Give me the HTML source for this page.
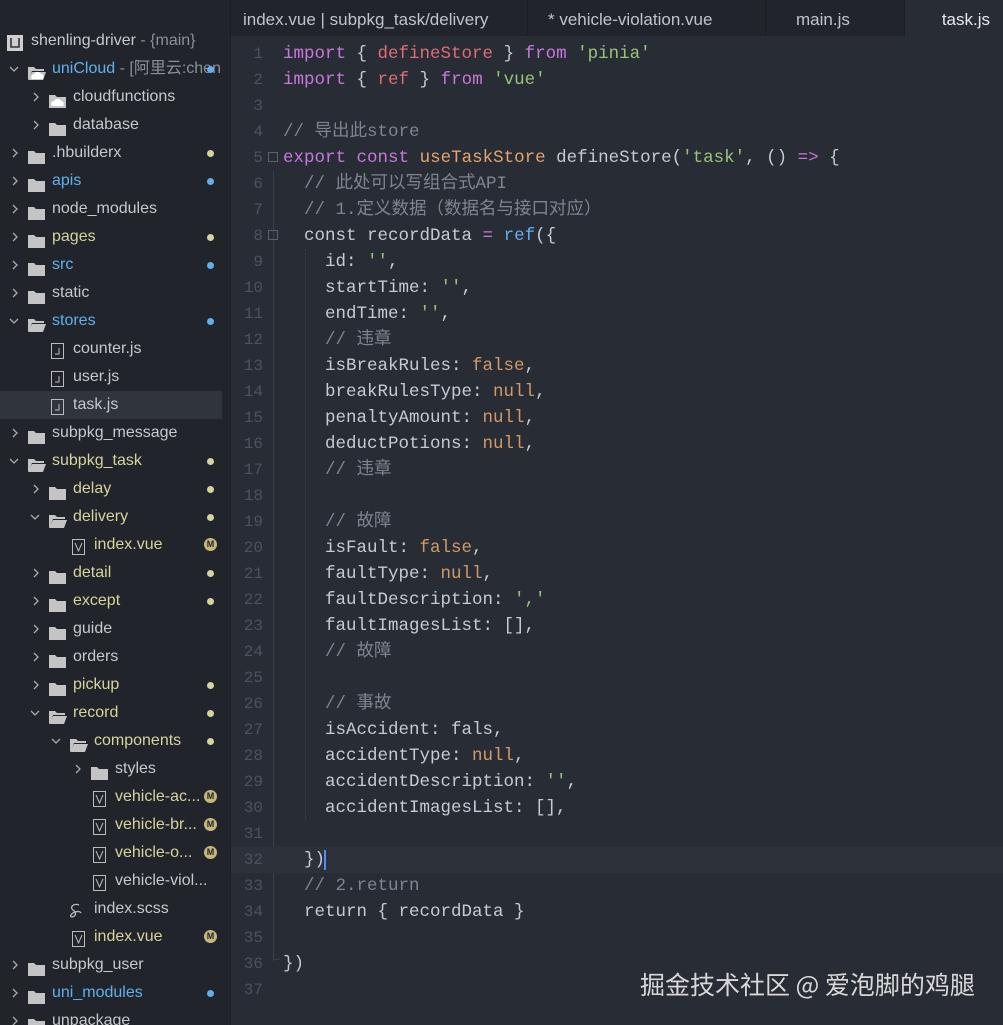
<!DOCTYPE html>
<html style="height:1025px;overflow:hidden"><head><meta charset="utf-8"><style>
*{margin:0;padding:0;box-sizing:border-box}
body{width:1003px;height:1025px;overflow:hidden;background:#282c34;position:relative;font-family:"Liberation Sans","Noto Sans CJK SC",sans-serif}
#side{position:absolute;left:0;top:0;width:231px;height:1025px;background:#21252b;border-right:1px solid #1b1e23}
#tree{position:absolute;left:0;top:0;width:231px;height:1025px;overflow:hidden}
.r{position:absolute;left:0;width:222px;height:28px;font-size:16px;line-height:28px;color:#c5c8cc;white-space:nowrap}
.r.sel{background:#2f343d}
.ar{position:absolute;top:0;width:10px;height:28px}
.ar svg{position:absolute;top:9px;left:0}
.ic{position:absolute;top:7px}
.t{position:absolute;top:0}
.b{color:#61afef}.y{color:#d6d39c}.g{color:#8a8f98}
.dot{position:absolute;left:207px;top:11px;width:7px;height:7px;border-radius:50%}
.db{background:#61afef}.dy{background:#d6d39c}
.m{position:absolute;left:204px;top:7px;width:13px;height:13px;border-radius:50%;background:#c9b77a;color:#21252b;font-size:9px;line-height:13px;text-align:center;font-weight:bold}
#tabs{position:absolute;left:231px;top:0;width:772px;height:36px;background:#21252b}
.tab{position:absolute;top:0;height:36px;line-height:40px;font-size:17px;color:#c0c4ca;border-right:1px solid #1b1e23}
#code{position:absolute;left:231px;top:41px;width:772px;height:984px;overflow:hidden;font-family:"Liberation Mono","Noto Sans CJK SC",monospace;font-size:17.5px;line-height:26px;color:#c5cad3}
.ln{position:absolute;width:32px;text-align:right;left:0;color:#4b5263;font-size:16px}
.cl{position:absolute;left:52px;white-space:pre}
.k{color:#c678dd}.rd{color:#e06c75}.s{color:#98c379}.o{color:#d19a66}.c{color:#7f848e}.bl{color:#61afef}.fn{color:#e5a46b}
</style></head><body>
<div id="side"></div>
<div id="tabs">
<div class="tab" style="left:0;width:297px;padding-left:12px">index.vue | subpkg_task/delivery</div>
<div class="tab" style="left:297px;width:238px;padding-left:20px">* vehicle-violation.vue</div>
<div class="tab" style="left:535px;width:139px;padding-left:30px">main.js</div>
<div class="tab" style="left:674px;width:98px;background:#282c34;color:#e6e8eb;text-align:right;padding-right:13px;border:none">task.js</div>
</div>

<div id="tree"></div>
<script>
var items=[
[0,'n','logo','shenling-driver','', ' - {main}'],
[0,'o','cloudo','uniCloud','b',' - [阿里云:chen','db'],
[1,'c','cloud','cloudfunctions',''],
[1,'c','f','database',''],
[0,'c','f','.hbuilderx','', '', 'dy'],
[0,'c','f','apis','b','','db'],
[0,'c','f','node_modules',''],
[0,'c','f','pages','y','','dy'],
[0,'c','f','src','b','','db'],
[0,'c','f','static',''],
[0,'o','fo','stores','b','','db'],
[1,'n','js','counter.js',''],
[1,'n','js','user.js',''],
[1,'n','js','task.js','', '', '', 'sel'],
[0,'c','f','subpkg_message',''],
[0,'o','fo','subpkg_task','y','','dy'],
[1,'c','f','delay','y','','dy'],
[1,'o','fo','delivery','y','','dy'],
[2,'n','v','index.vue','y','','M'],
[1,'c','f','detail','y','','dy'],
[1,'c','f','except','y','','dy'],
[1,'c','f','guide',''],
[1,'c','f','orders',''],
[1,'c','f','pickup','y','','dy'],
[1,'o','fo','record','y','','dy'],
[2,'o','fo','components','y','','dy'],
[3,'c','f','styles',''],
[3,'n','v','vehicle-ac...','y','','M'],
[3,'n','v','vehicle-br...','y','','M'],
[3,'n','v','vehicle-o...','y','','M'],
[3,'n','v','vehicle-viol...',''],
[2,'n','scss','index.scss',''],
[2,'n','v','index.vue','y','','M'],
[0,'c','f','subpkg_user',''],
[0,'c','f','uni_modules','b','','db'],
[0,'c','f','unpackage','']
];
var ic={
f:'<svg width="17" height="14"><path d="M0 1h6l2 2h9v11H0z" fill="#c4c4c4"/></svg>',
fo:'<svg width="18" height="14"><path d="M0 1h6l2 2h8v2H4L1 13H0z" fill="#c4c4c4"/><path d="M4 6h14l-3 8H0z" fill="#c4c4c4"/></svg>',
cloud:'<svg width="17" height="14"><path d="M0 1h6l2 2h9v11H0z" fill="#c4c4c4"/><path d="M3 12a3 3 0 0 1 2-5a4 4 0 0 1 7 0a3 3 0 0 1 2 5z" fill="#fff"/></svg>',
cloudo:'<svg width="18" height="14"><path d="M0 1h6l2 2h8v2H4L1 13H0z" fill="#c4c4c4"/><path d="M4 6h14l-3 8H0z" fill="#c4c4c4"/><path d="M4 13a3 3 0 0 1 2-5a4 4 0 0 1 7 0a3 3 0 0 1 2 5z" fill="#fff"/></svg>',
js:'<svg width="13" height="16"><rect x="0.5" y="0.5" width="12" height="15" fill="none" stroke="#bbb"/><path d="M8 5v6H4" fill="none" stroke="#bbb"/></svg>',
v:'<svg width="13" height="16"><rect x="0.5" y="0.5" width="12" height="15" fill="none" stroke="#bbb"/><path d="M3 4l3.5 8L10 4" fill="none" stroke="#bbb"/></svg>',
scss:'<svg width="16" height="16"><path d="M11 2C6 0 1 4 5 7s3 6-1 7c-2 0-2-2 1-4s7-2 8 0" fill="none" stroke="#bbb" stroke-width="1.3"/></svg>',
logo:'<svg width="16" height="16"><rect width="16" height="16" fill="#cfcfcf"/><path d="M4 3v9h8V3" fill="none" stroke="#333" stroke-width="1.6"/></svg>'
};
var h='';
items.forEach(function(it,k){
 var L=it[0],top=27+28*k;
 h+='<div class="r'+(it[7]?' sel':'')+'" style="top:'+top+'px">';
 var ax=14+21*L;
 if(it[1]=='c')h+='<div class="ar" style="left:'+(ax-4)+'px"><svg width="10" height="10"><path d="M3 1l4 4-4 4" fill="none" stroke="#aaa" stroke-width="1.3"/></svg></div>';
 if(it[1]=='o')h+='<div class="ar" style="left:'+(ax-6)+'px"><svg width="12" height="10"><path d="M2 3l4 4 4-4" fill="none" stroke="#aaa" stroke-width="1.3"/></svg></div>';
 var ix=(it[2]=='logo')?7:(28+21*L+((it[2]=='js'||it[2]=='v')?2:0)-(it[2]=='scss'?2:0));
 h+='<div class="ic" style="left:'+ix+'px;top:'+((it[2]=='js'||it[2]=='v'||it[2]=='scss'||it[2]=='logo')?6:7)+'px">'+ic[it[2]]+'</div>';
 var tx=(it[2]=='logo')?31:(52+21*L);
 h+='<div class="t '+it[4]+'" style="left:'+tx+'px">'+it[3]+(it[5]?'<span class="g">'+it[5]+'</span>':'')+'</div>';
 if(it[6]=='M')h+='<div class="m">M</div>';else if(it[6])h+='<div class="dot '+it[6]+'"></div>';
 h+='</div>';
});
document.getElementById('tree').innerHTML=h;
</script>

<div id="code">
<div style="position:absolute;left:42px;top:130px;width:1px;height:790px;background:#3a3f4a"></div>
<div style="position:absolute;left:42px;top:918px;width:6px;height:1px;background:#3a3f4a"></div>
<div style="position:absolute;left:74px;top:208px;width:0;height:570px;border-left:1px dotted #3e4450"></div>
<div style="position:absolute;left:37px;top:111px;width:10px;height:10px;border:1px solid #5c6370"></div>
<div style="position:absolute;left:37px;top:189px;width:10px;height:10px;border:1px solid #5c6370"></div>
<div style="position:absolute;left:0;top:806px;width:772px;height:26px;background:#2c313a"></div>
<div id="lines"></div>
</div>
<script>
var L=[
'<span class="k">import</span> { <span class="rd">defineStore</span> } <span class="k">from</span> <span class="s">\'pinia\'</span>',
'<span class="k">import</span> { <span class="rd">ref</span> } <span class="k">from</span> <span class="s">\'vue\'</span>',
'',
'<span class="c">// 导出此store</span>',
'<span class="k">export</span> <span class="k">const</span> <span class="fn">useTaskStore</span> defineStore(<span class="s">\'task\'</span>, () <span class="k">=&gt;</span> {',
'  <span class="c">// 此处可以写组合式API</span>',
'  <span class="c">// 1.定义数据（数据名与接口对应）</span>',
'  const recordData <span class="k">=</span> <span class="bl">ref</span>({',
'    id: <span class="s">\'\'</span>,',
'    startTime: <span class="s">\'\'</span>,',
'    endTime: <span class="s">\'\'</span>,',
'    <span class="c">// 违章</span>',
'    isBreakRules: <span class="o">false</span>,',
'    breakRulesType: <span class="o">null</span>,',
'    penaltyAmount: <span class="o">null</span>,',
'    deductPotions: <span class="o">null</span>,',
'    <span class="c">// 违章</span>',
'',
'    <span class="c">// 故障</span>',
'    isFault: <span class="o">false</span>,',
'    faultType: <span class="o">null</span>,',
'    faultDescription: <span class="s">\',\'</span>',
'    faultImagesList: [],',
'    <span class="c">// 故障</span>',
'',
'    <span class="c">// 事故</span>',
'    isAccident: fals,',
'    accidentType: <span class="o">null</span>,',
'    accidentDescription: <span class="s">\'\'</span>,',
'    accidentImagesList: [],',
'',
'  })<span style="border-left:2px solid #528bff;margin-left:-1px"></span>',
'  <span class="c">// 2.return</span>',
'  return { recordData }',
'',
'})',
''
];
var o='';
L.forEach(function(s,i){o+='<div class="ln" style="top:'+(26*i)+'px">'+(i+1)+'</div><div class="cl" style="top:'+(26*i)+'px">'+s+'</div>';});
document.getElementById('lines').innerHTML=o;
</script>
<div style="position:absolute;left:640px;top:966px;font-size:25px;color:#d8d8d8;font-family:'Noto Sans CJK SC','Liberation Sans',sans-serif;line-height:36px;white-space:nowrap">掘金技术社区 @ 爱泡脚的鸡腿</div>
</body></html>
